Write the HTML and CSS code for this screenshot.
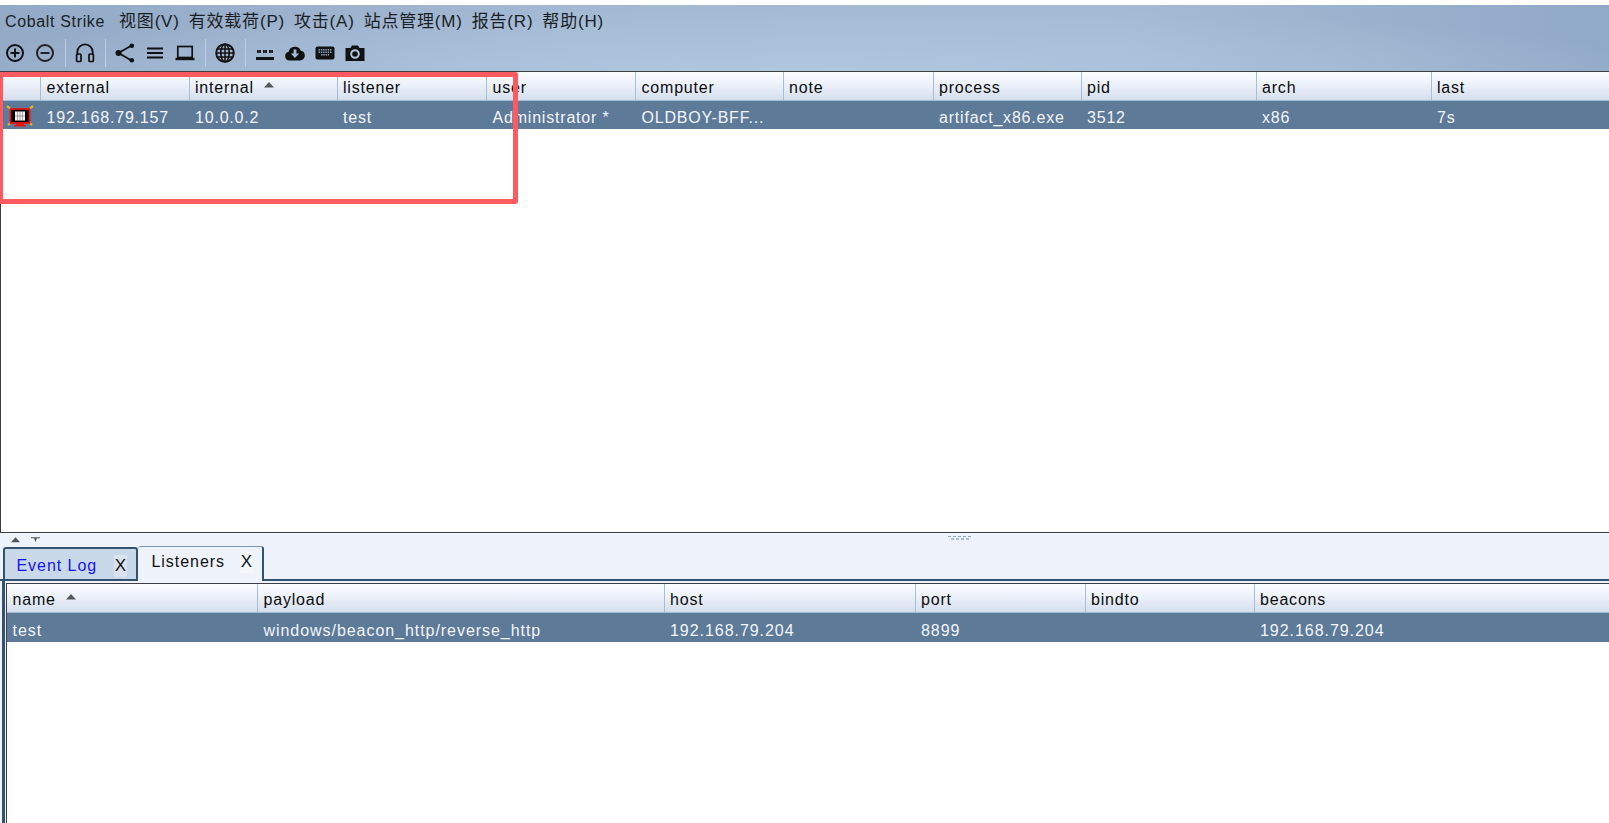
FILE: index.html
```html
<!DOCTYPE html>
<html lang="zh">
<head>
<meta charset="utf-8">
<title>Cobalt Strike</title>
<link rel="stylesheet" href="styles.css">
</head>
<body>
<div class="app">
  <header class="chrome">
    <nav class="menubar">
      <span class="menu menu-app">Cobalt Strike</span>
      <span class="menu">视图(V)</span>
      <span class="menu">有效载荷(P)</span>
      <span class="menu">攻击(A)</span>
      <span class="menu">站点管理(M)</span>
      <span class="menu">报告(R)</span>
      <span class="menu">帮助(H)</span>
    </nav>
    <div class="toolbar">
      <span class="tool"><svg viewBox="0 0 20 20" class="ico"><circle cx="10" cy="10" r="8" fill="none" stroke="#111" stroke-width="2"/><path d="M5.500 10h9M10 5.500v9" stroke="#111" stroke-width="2"/></svg></span>
      <span class="tool"><svg viewBox="0 0 20 20" class="ico"><circle cx="10" cy="10" r="8" fill="none" stroke="#222" stroke-width="2"/><path d="M5.500 10h9" stroke="#222" stroke-width="2"/></svg></span>
      <span class="sep"></span>
      <span class="tool"><svg viewBox="0 0 20 20" class="ico"><path d="M2.300 12V9a7.700 7.700 0 0 1 15.400 0v3" fill="none" stroke="#111" stroke-width="1.800"/><rect x="1.600" y="11" width="4.400" height="7.500" rx="1" fill="none" stroke="#111" stroke-width="1.700"/><rect x="14" y="11" width="4.400" height="7.500" rx="1" fill="none" stroke="#111" stroke-width="1.700"/></svg></span>
      <span class="sep"></span>
      <span class="tool"><svg viewBox="0 0 20 20" class="ico"><path d="M16.500 2.500 3.500 10l13 7.500" fill="none" stroke="#111" stroke-width="1.700"/><circle cx="16.800" cy="2.800" r="2.300" fill="#111"/><circle cx="3.500" cy="10" r="3" fill="#111"/><circle cx="16.800" cy="17.200" r="2.300" fill="#111"/></svg></span>
      <span class="tool"><svg viewBox="0 0 20 20" class="ico"><path d="M2 5.500h16M2 10h16M2 14.500h16" stroke="#111" stroke-width="2.200"/></svg></span>
      <span class="tool"><svg viewBox="0 0 20 20" class="ico"><rect x="2.800" y="3.500" width="14.400" height="11" fill="none" stroke="#111" stroke-width="1.700"/><path d="M.5 16h19" stroke="#111" stroke-width="2.400"/></svg></span>
      <span class="sep"></span>
      <span class="tool"><svg viewBox="0 0 20 20" class="ico"><circle cx="10" cy="10" r="8.800" fill="none" stroke="#111" stroke-width="1.900"/><ellipse cx="10" cy="10" rx="4.200" ry="8.800" fill="none" stroke="#111" stroke-width="1.600"/><path d="M10 1.500v17M1.500 10h17M2.800 6h14.400M2.800 14h14.400" stroke="#111" stroke-width="1.500"/></svg></span>
      <span class="sep"></span>
      <span class="tool"><svg viewBox="0 0 20 20" class="ico"><path d="M1 15.500h18" stroke="#111" stroke-width="3"/><path d="M2 8.500h4M8 8.500h4M14 8.500h4" stroke="#111" stroke-width="3" stroke-dasharray="1.200 .2"/></svg></span>
      <span class="tool"><svg viewBox="0 0 20 20" class="ico"><path d="M4.500 17.500a4.400 4.400 0 0 1-.8-8.700A6.300 6.300 0 0 1 15.800 7.800a4.900 4.900 0 0 1 4 4.900 4.800 4.800 0 0 1-4.800 4.800z" fill="#111"/><path d="M8.600 6.500h2.800v4h2.800L10 15 5.800 10.500h2.800z" fill="#a6bdd8"/></svg></span>
      <span class="tool"><svg viewBox="0 0 20 20" class="ico"><rect x="0.500" y="3.500" width="19" height="13" rx="2" fill="#111"/><path d="M3.500 6.800h13M3.500 9.300h13M6 11.800h8" stroke="#8ea5c0" stroke-width="1.400" stroke-dasharray="1.500 .8"/></svg></span>
      <span class="tool"><svg viewBox="0 0 20 20" class="ico"><path d="M.5 5h5l1.500-2.500h6L14.500 5h5v13H.5z" fill="#111"/><circle cx="10" cy="11" r="3.800" fill="none" stroke="#b4c6dd" stroke-width="2"/></svg></span>
    </div>
  </header>

  <section class="top-pane">
    <div class="thead cols-top">
      <div class="th"></div>
      <div class="th">external</div>
      <div class="th">internal<svg class="sort" viewBox="0 0 10 6"><path d="M5 0 10 5.500H0z"/></svg></div>
      <div class="th">listener</div>
      <div class="th">user</div>
      <div class="th">computer</div>
      <div class="th">note</div>
      <div class="th">process</div>
      <div class="th">pid</div>
      <div class="th">arch</div>
      <div class="th">last</div>
    </div>
    <div class="trow trow-top cols-top">
      <div class="td icon-cell"><svg class="beacon" viewBox="0 0 28 22"><path d="M1 1l6 5M27 1l-6 5M2 20l5-4M26 20l-5-4" stroke="#e8c020" stroke-width="2"/><rect x="4.500" y="4" width="19" height="14" fill="#000" stroke="#e01818" stroke-width="1.800"/><path d="M10 18h8v2h2v1.500H8V20h2z" fill="#e01818"/><rect x="9" y="6.500" width="10" height="9" fill="#f4f4f4"/><path d="M14 6.500v9M9 11h10M11.500 6.500v9M16.500 6.500v9" stroke="#777" stroke-width=".6"/></svg></div>
      <div class="td">192.168.79.157</div>
      <div class="td">10.0.0.2</div>
      <div class="td">test</div>
      <div class="td">Administrator *</div>
      <div class="td">OLDBOY-BFF...</div>
      <div class="td"></div>
      <div class="td">artifact_x86.exe</div>
      <div class="td">3512</div>
      <div class="td">x86</div>
      <div class="td">7s</div>
    </div>
  </section>

  <section class="bottom-pane">
    <div class="split">
      <svg class="nub" viewBox="0 0 10 6"><path d="M5 0 10 5.500H0z"/></svg>
      <svg class="nub" viewBox="0 0 10 6"><path d="M0 0h10v1H6.500L5 5.500 3.500 1H0z"/></svg>
      <span class="grip"></span>
    </div>
    <div class="tabbar">
      <div class="tab tab-idle"><span class="tab-label">Event Log</span><span class="tab-x">X</span></div>
      <div class="tab tab-active"><span class="tab-label">Listeners</span><span class="tab-x">X</span></div>
    </div>
    <div class="panel">
      <div class="panel-inner">
        <div class="thead cols-bottom">
          <div class="th">name<svg class="sort" viewBox="0 0 10 6"><path d="M5 0 10 5.500H0z"/></svg></div>
          <div class="th">payload</div>
          <div class="th">host</div>
          <div class="th">port</div>
          <div class="th">bindto</div>
          <div class="th">beacons</div>
        </div>
        <div class="trow trow-bottom cols-bottom">
          <div class="td">test</div>
          <div class="td">windows/beacon_http/reverse_http</div>
          <div class="td">192.168.79.204</div>
          <div class="td">8899</div>
          <div class="td"></div>
          <div class="td">192.168.79.204</div>
        </div>
      </div>
    </div>
  </section>

  <div class="highlight"></div>
</div>
</body>
</html>
```

FILE: styles.css
```css
* { box-sizing: border-box; }
html, body { margin: 0; height: 100%; background: #fff; overflow: hidden; }
body { font-family: "Liberation Sans", "Noto Sans CJK SC", sans-serif; font-size: 16px; color: #111; }
.app { position: relative; height: 823px; padding-top: 5px; display: flex; flex-direction: column; }

.chrome {
  height: 66px;
  background:
    radial-gradient(ellipse 900px 70px at 800px 70px, #b1c6df 0%, rgba(177,198,223,0) 100%),
    linear-gradient(90deg, #93aac7 0%, #a3b8d2 35%, #a5bad4 70%, #90a9c7 100%);
}
.menubar { height: 32px; display: flex; align-items: baseline; padding: 7px 0 0 5px; gap: 9px; font-size: 17px; line-height: 20px; letter-spacing: .8px; color: #1a1f26; white-space: nowrap; }
.menu-app { font-size: 16px; letter-spacing: .65px; margin-right: 5px; }
.toolbar { height: 34px; display: flex; align-items: center; padding-bottom: 2px; }
.tool { width: 30px; display: flex; justify-content: center; }
.ico { width: 20px; height: 20px; display: block; }
.sep { width: 10px; height: 28px; background: linear-gradient(#bccde2, #bccde2) center / 1px 100% no-repeat; }

.top-pane { height: 462px; border: 1px solid #3c3f44; border-right: 0; }
.thead { height: 29px; display: grid; background: linear-gradient(#fbfcff 0%, #eef2fa 40%, #d5dfec 100%); border-bottom: 1px solid #a5bfd8; }
.trow { height: 29px; display: grid; background: #5e7a99; color: #f2f5f9; }
.trow-top { height: 28px; }
.cols-top { grid-template-columns: 40px 148.500px 148px 149.500px 149px 147.500px 150px 148px 175px 175px 1fr; }
.cols-bottom { grid-template-columns: 251px 406.500px 251px 170px 169px 1fr; }
.th, .td { display: flex; align-items: center; padding-left: 5.500px; white-space: nowrap; overflow: hidden; }
.th { color: #0d0d0d; border-right: 1px solid #a5bfd8; padding-top: 3px; letter-spacing: .8px; }
.td { letter-spacing: .8px; padding-top: 5px; }
.trow-bottom .td { padding-top: 6px; letter-spacing: .95px; }
.th:last-child { border-right: 0; }
.td.icon-cell { padding: 2px 0 0 5px; }
.beacon { width: 28px; height: 22px; }
.sort { width: 10px; height: 6px; margin: 0 0 5px 10px; fill: #55585c; }

.bottom-pane { flex: 1; display: flex; flex-direction: column; background: #eef2fa; }
.split { height: 13px; display: flex; align-items: center; padding-left: 11px; gap: 11px; position: relative; }
.nub { width: 9px; height: 6px; fill: #555; }
.grip {
  position: absolute; left: 948px; top: 3px; width: 23px; height: 4px;
  background:
    repeating-linear-gradient(90deg, #8aa6c4 0 3px, transparent 3px 5px) 0 0 / 100% 1px no-repeat,
    repeating-linear-gradient(90deg, #a9bdd3 0 3px, transparent 3px 5px) 3px 2px / 100% 2px no-repeat;
}
.tabbar { height: 35px; display: flex; align-items: flex-end; padding-left: 3px; border-bottom: 2px solid #335171; }
.tab { height: 34px; display: flex; align-items: center; justify-content: space-between; border: 2px solid #335171; border-bottom: 0; border-radius: 3px 3px 0 0; margin-bottom: -2px; position: relative; letter-spacing: .95px; }
.tab-idle { width: 135px; background: #c9d9ea; color: #1414ee; padding: 4px 9px 0 11.500px; border-bottom: 2px solid #335171; }
.tab-active { width: 126px; height: 35px; background: #eef2fa; color: #111; padding: 0 9px 4px 13.500px; border-left: 0; border-top-color: #7e95ad; border-top-width: 1px; }
.tab-x { letter-spacing: 0; font-size: 17px; background: rgba(255,255,255,.3); color: #111; padding: 1px 1px; }

.panel { flex: 1; margin: 0 0 0 2px; border-left: 3px solid #335171; padding: 2px 0 0 1px; display: flex; min-height: 0; }
.panel-inner { flex: 1; background: #fff; border-left: 1px solid #3c3f44; border-top: 1px solid #3c3f44; }

.highlight { position: absolute; left: -2px; top: 72px; width: 520px; height: 132px; border: 5px solid #ff5a5f; border-radius: 3px; pointer-events: none; }
```
